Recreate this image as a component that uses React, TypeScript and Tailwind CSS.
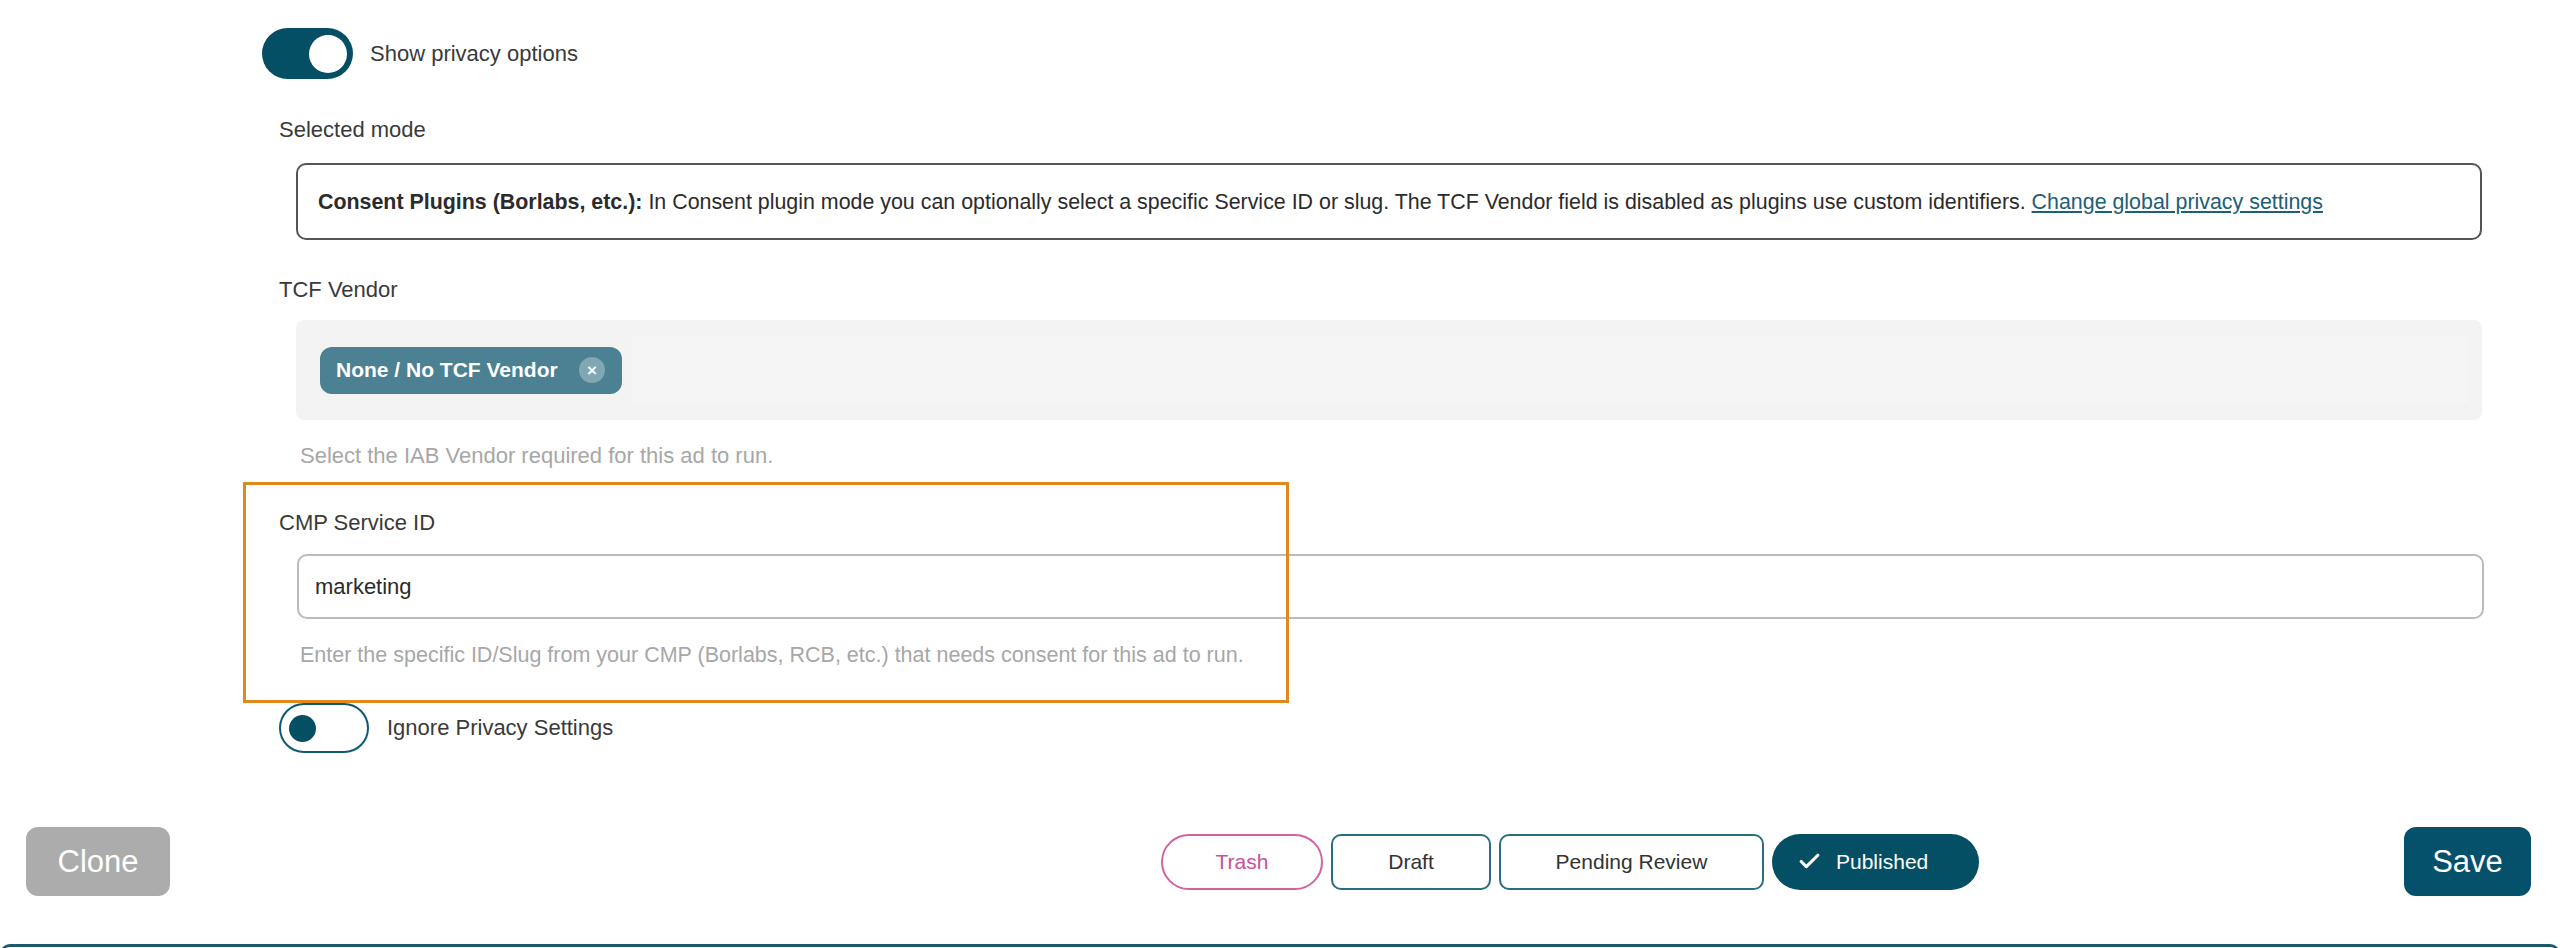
import { Check } from 'lucide-react';

function Toggle({ on }: { on: boolean }) {
  if (on) {
    return (
      <div className="flex h-[51px] w-[91px] shrink-0 items-center justify-end rounded-full bg-[#044f64] pr-[6px]">
        <div className="h-[38px] w-[38px] rounded-full bg-white" />
      </div>
    );
  }
  return (
    <div className="flex h-[50px] w-[90px] shrink-0 items-center rounded-full border-2 border-[#0b5a70] bg-white pl-[8px]">
      <div className="h-[27px] w-[27px] rounded-full bg-[#044f64]" />
    </div>
  );
}

export default function App() {
  return (
    <div className="relative h-[948px] overflow-hidden bg-white font-['Liberation_Sans',Arial,sans-serif] text-[22px] leading-[30px] text-[#3a3a3a]">
      <div className="pl-[262px] pr-[78px] pt-[28px]">
        {/* privacy toggle */}
        <div className="flex items-center gap-[17px]">
          <Toggle on />
          <span>Show privacy options</span>
        </div>

        {/* selected mode */}
        <div className="ml-[17px] mt-[36px]">Selected mode</div>
        <div className="ml-[34px] mt-[18px] flex h-[77px] items-center rounded-[10px] border-2 border-[#555555] px-[20px] text-[21.4px] text-[#2b2b2b]">
          <p>
            <span className="font-bold">Consent Plugins (Borlabs, etc.):</span> In Consent plugin mode you can
            optionally select a specific Service ID or slug. The TCF Vendor field is disabled as plugins use custom
            identifiers. <a className="text-[#1d5f75] underline">Change global privacy settings</a>
          </p>
        </div>

        {/* tcf vendor */}
        <div className="ml-[17px] mt-[35px]">TCF Vendor</div>
        <div className="ml-[34px] mt-[15px] flex h-[100px] items-center rounded-[8px] bg-[#f3f3f3] pl-[24px] pr-[14px]">
          <div className="flex h-[47px] w-[302px] items-center justify-between rounded-[12px] bg-[#4b8193] pl-[16px] pr-[17px] text-[21px] font-bold text-white">
            <span>None / No TCF Vendor</span>
            <span className="flex h-[26px] w-[26px] items-center justify-center rounded-full bg-white/30 text-[17px] font-bold leading-none">
              ×
            </span>
          </div>
          <div className="ml-[10px] h-[66px] flex-1 bg-[#f5f5f5]" />
        </div>
        <div className="ml-[38px] mt-[21px] text-[#a7a7a7]">Select the IAB Vendor required for this ad to run.</div>

        {/* cmp service id */}
        <div className="ml-[17px] mt-[37px]">CMP Service ID</div>
        <div className="ml-[35px] mr-[-2px] mt-[16px] flex h-[65px] items-center rounded-[10px] border-2 border-[#bbbbbb] pl-[16px] text-[#2b2b2b]">
          marketing
        </div>
        <div className="ml-[38px] mt-[21px] text-[21.5px] text-[#a7a7a7]">
          Enter the specific ID/Slug from your CMP (Borlabs, RCB, etc.) that needs consent for this ad to run.
        </div>

        {/* ignore privacy */}
        <div className="ml-[17px] mt-[33px] flex items-center gap-[18px]">
          <Toggle on={false} />
          <span>Ignore Privacy Settings</span>
        </div>
      </div>

      {/* highlight frame */}
      <div className="pointer-events-none absolute left-[243px] top-[482px] h-[221px] w-[1046px] border-[3px] border-[#e0891c]" />

      {/* bottom actions */}
      <div className="mt-[74px] flex items-center pl-[26px] pr-[29px] text-[21px]">
        <button className="h-[69px] w-[144px] rounded-[12px] bg-[#acacac] text-[31px] text-white">Clone</button>
        <div className="ml-[991px] flex items-center gap-[8px]">
          <button className="h-[56px] w-[162px] rounded-full border-2 border-[#d163a3] text-[#c9509a]">Trash</button>
          <button className="h-[56px] w-[160px] rounded-[10px] border-2 border-[#2b6e7f] text-[#333333]">Draft</button>
          <button className="h-[56px] w-[265px] rounded-[10px] border-2 border-[#2b6e7f] text-[#333333]">
            Pending Review
          </button>
          <button className="flex h-[56px] w-[207px] items-center gap-[14px] rounded-full bg-[#044f64] pl-[25px] text-white">
            <Check size={25} strokeWidth={3} />
            <span>Published</span>
          </button>
        </div>
        <button className="ml-auto h-[69px] w-[127px] rounded-[12px] bg-[#05506a] text-[31px] text-white">Save</button>
      </div>

      <div className="mt-[48px] h-[10px] rounded-t-[14px] border-x-2 border-t-[3px] border-[#1b5a6b]" />
    </div>
  );
}
